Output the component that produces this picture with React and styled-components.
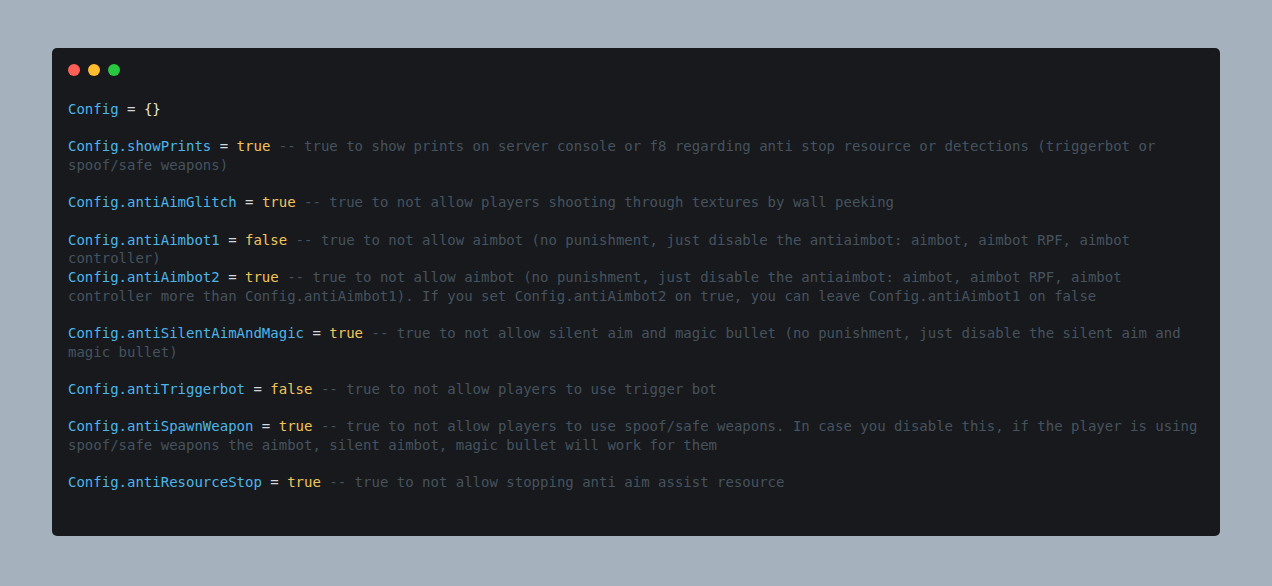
import React from "react";
import styled, { createGlobalStyle } from "styled-components";

const settings = [
  { key: "Config", value: "{}", gap: false },
  {
    key: "Config.showPrints",
    value: "true",
    note: "true to show prints on server console or f8 regarding anti stop resource or detections (triggerbot or spoof/safe weapons)",
    gap: true,
  },
  {
    key: "Config.antiAimGlitch",
    value: "true",
    note: "true to not allow players shooting through textures by wall peeking",
    gap: true,
  },
  {
    key: "Config.antiAimbot1",
    value: "false",
    note: "true to not allow aimbot (no punishment, just disable the antiaimbot: aimbot, aimbot RPF, aimbot controller)",
    gap: true,
  },
  {
    key: "Config.antiAimbot2",
    value: "true",
    note: "true to not allow aimbot (no punishment, just disable the antiaimbot: aimbot, aimbot RPF, aimbot controller more than Config.antiAimbot1). If you set Config.antiAimbot2 on true, you can leave Config.antiAimbot1 on false",
    gap: false,
  },
  {
    key: "Config.antiSilentAimAndMagic",
    value: "true",
    note: "true to not allow silent aim and magic bullet (no punishment, just disable the silent aim and magic bullet)",
    gap: true,
  },
  {
    key: "Config.antiTriggerbot",
    value: "false",
    note: "true to not allow players to use trigger bot",
    gap: true,
  },
  {
    key: "Config.antiSpawnWeapon",
    value: "true",
    note: "true to not allow players to use spoof/safe weapons. In case you disable this, if the player is using spoof/safe weapons the aimbot, silent aimbot, magic bullet will work for them",
    gap: true,
  },
  {
    key: "Config.antiResourceStop",
    value: "true",
    note: "true to not allow stopping anti aim assist resource",
    gap: true,
  },
];

const App = () => {
  return (
    <>
      <GlobalStyle />
      <Page>
        <Window>
          <TitleBar>
            <Dot color="#ff5f57" />
            <Dot color="#febc2e" />
            <Dot color="#28c840" />
          </TitleBar>
          <Code>
            {settings.map((s, i) => (
              <Line key={i} $gap={s.gap}>
                <Ident>{s.key}</Ident>
                <Op> = </Op>
                {s.value === "{}" ? (
                  <Brace>{s.value}</Brace>
                ) : (
                  <Bool>{s.value}</Bool>
                )}
                {s.note && <Comment> -- {s.note}</Comment>}
              </Line>
            ))}
          </Code>
        </Window>
      </Page>
    </>
  );
};

export default App;

const GlobalStyle = createGlobalStyle`
  html, body {
    margin: 0;
    padding: 0;
    background: #a5b2bd;
  }
`;

const Page = styled.div`
  width: 1272px;
  height: 586px;
  box-sizing: border-box;
  padding: 48px 52px 0;
  background: #a5b2bd;
`;

const Window = styled.div`
  background: #17191c;
  border-radius: 5px;
  padding: 16px 16px 44px;
  box-sizing: border-box;
`;

const TitleBar = styled.div`
  display: flex;
  gap: 8px;
  height: 12px;
  margin-bottom: 24px;
`;

const Dot = styled.span`
  width: 12px;
  height: 12px;
  border-radius: 50%;
  background: ${(p) => p.color};
`;

const Code = styled.div`
  font-family: "DejaVu Sans Mono", "Liberation Mono", monospace;
  font-size: 14px;
  line-height: 18.67px;
  color: #c9d1d9;
  white-space: pre-wrap;
`;

const Line = styled.div`
  margin-top: ${(p) => (p.$gap ? "18.67px" : "0")};
`;

const Ident = styled.span`
  color: #4db5e8;
`;

const Op = styled.span`
  color: #d4d8dc;
`;

const Bool = styled.span`
  color: #f2c55c;
`;

const Brace = styled.span`
  color: #ece3cf;
`;

const Comment = styled.span`
  color: #46535f;
`;
